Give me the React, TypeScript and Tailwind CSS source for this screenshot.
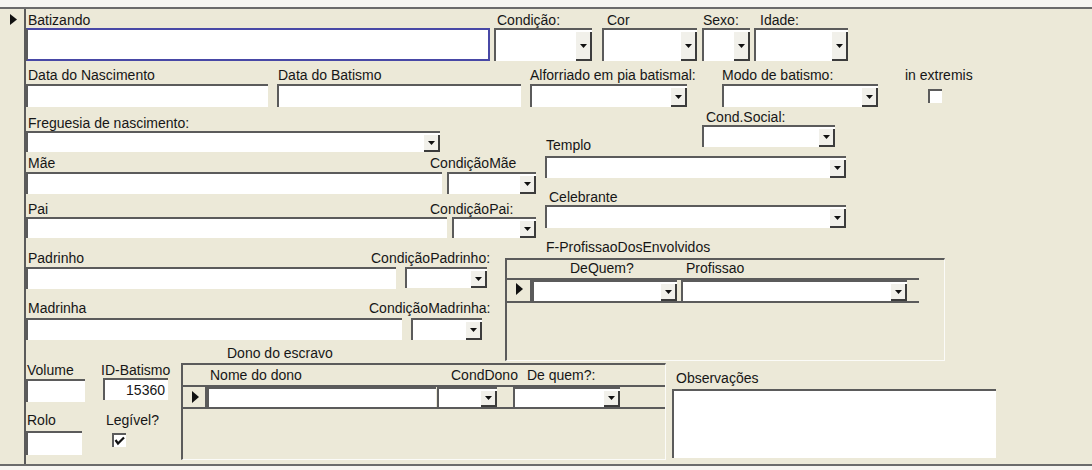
import type { ReactNode } from 'react';

// sunken control edge used by every text box / combo
const EDGE = 'border-t-2 border-l-2 border-[#5b5b5b]';

function Label({ children, className = '' }: { children: ReactNode; className?: string }) {
  return <div className={`h-[16px] leading-[16px] whitespace-nowrap ${className}`}>{children}</div>;
}

function TextBox({ className = '', children }: { className?: string; children?: ReactNode }) {
  return <div className={`bg-white ${EDGE} ${className}`}>{children}</div>;
}

function DropArrow() {
  return (
    <svg width="7" height="4" viewBox="0 0 7 4">
      <path d="M0 0h7L3.5 4z" fill="#111" />
    </svg>
  );
}

function Combo({ className = '' }: { className?: string }) {
  return (
    <div className={`flex bg-white ${EDGE} ${className}`}>
      <div className="flex-1" />
      <div className="w-[16px] mt-[2px] flex items-center justify-center bg-[#f1f0ea] border-r-2 border-b-2 border-[#3c3c3c]">
        <DropArrow />
      </div>
    </div>
  );
}

function CheckBox({ checked = false, className = '' }: { checked?: boolean; className?: string }) {
  return (
    <div className={`w-[14px] h-[14px] bg-white ${EDGE} ${className}`}>
      {checked && (
        <svg width="12" height="12" viewBox="0 0 12 12" className="block">
          <path d="M1.5 5l2.5 3.5L10 2.5" fill="none" stroke="#111" strokeWidth="2.2" />
        </svg>
      )}
    </div>
  );
}

function RowArrow() {
  return (
    <svg width="7" height="12" viewBox="0 0 7 12" className="block">
      <path d="M0 0L7 6L0 12z" fill="#111" />
    </svg>
  );
}

// subform frame: dark top/left, light bottom/right
const FRAME =
  'border-t-2 border-l-2 border-r border-b border-t-[#5b5b5b] border-l-[#5b5b5b] border-r-[#fbfbf8] border-b-[#fbfbf8]';

export default function App() {
  return (
    <div className="w-[1092px] h-[470px] bg-[#ECE9D8] text-[14px] text-[#161616] overflow-hidden font-['Liberation_Sans',Arial,sans-serif]">
      <div className="h-[7px] bg-[#f6f5f1]" />
      <div className="flex h-[459px] border-y-2 border-[#6b6b6b]">
        {/* record selector */}
        <div className="w-[26px] shrink-0 border-r-2 border-[#5b5b5b] pt-[5px] pl-[10px]">
          <svg width="7" height="11" viewBox="0 0 7 11" className="block">
            <path d="M0 0L7 5.5L0 11z" fill="#111" />
          </svg>
        </div>

        <div className="flex-1 flex flex-col">
          {/* Batizando / Condição / Cor / Sexo / Idade */}
          <div className="flex pt-[3px] h-[52px] shrink-0">
            <div className="flex flex-col w-[464px]">
              <Label className="pl-[2px]">Batizando</Label>
              <div className="h-[33px] bg-white border-2 border-[#4848a6] border-l-[#5b5b5b]" />
            </div>
            <div className="flex flex-col ml-[4px] w-[98px]">
              <Label className="pl-[3px]">Condição:</Label>
              <Combo className="h-[33px]" />
            </div>
            <div className="flex flex-col ml-[10px] w-[95px]">
              <Label className="pl-[5px]">Cor</Label>
              <Combo className="h-[33px]" />
            </div>
            <div className="flex flex-col ml-[5px] w-[48px]">
              <Label className="pl-[1px]">Sexo:</Label>
              <Combo className="h-[33px]" />
            </div>
            <div className="flex flex-col ml-[4px] w-[94px]">
              <Label className="pl-[6px]">Idade:</Label>
              <Combo className="h-[33px]" />
            </div>
          </div>

          {/* datas, alforria, modo */}
          <div className="flex pt-[6px] h-[46px] shrink-0">
            <div className="flex flex-col w-[242px]">
              <Label className="pl-[2px]">Data do Nascimento</Label>
              <TextBox className="mt-[1px] h-[23px]" />
            </div>
            <div className="flex flex-col ml-[9px] w-[244px]">
              <Label className="pl-[1px]">Data do Batismo</Label>
              <TextBox className="mt-[1px] h-[23px]" />
            </div>
            <div className="flex flex-col ml-[9px] w-[157px]">
              <Label>Alforriado em pia batismal:</Label>
              <Combo className="mt-[1px] h-[23px]" />
            </div>
            <div className="flex flex-col ml-[35px] w-[156px]">
              <Label>Modo de batismo:</Label>
              <Combo className="mt-[1px] h-[23px]" />
            </div>
            <div className="flex flex-col ml-[27px]">
              <Label>in extremis</Label>
              <CheckBox className="ml-[23px] mt-[6px]" />
            </div>
          </div>

          {/* freguesia, pais / templo, celebrante */}
          <div className="flex h-[131px] shrink-0">
            <div className="flex flex-col w-[510px]">
              <Label className="mt-[8px] pl-[2px]">Freguesia de nascimento:</Label>
              <Combo className="w-[414px] h-[21px]" />

              <div className="flex mt-[3px]">
                <div className="flex flex-col w-[416px]">
                  <Label className="pl-[2px]">Mãe</Label>
                  <TextBox className="mt-[1px] h-[22px]" />
                </div>
                <div className="flex flex-col ml-[5px] w-[89px]">
                  <Label className="ml-[-17px]">CondiçãoMãe</Label>
                  <Combo className="mt-[1px] h-[22px]" />
                </div>
              </div>

              <div className="flex mt-[7px]">
                <div className="flex flex-col w-[421px]">
                  <Label className="pl-[2px]">Pai</Label>
                  <TextBox className="h-[21px]" />
                </div>
                <div className="flex flex-col ml-[5px] w-[84px]">
                  <Label className="ml-[-22px]">CondiçãoPai:</Label>
                  <Combo className="h-[21px]" />
                </div>
              </div>
            </div>

            <div className="flex flex-col ml-[9px] w-[301px]">
              <div className="flex items-end pt-[2px]">
                <div className="w-[157px] mb-[-6px]">
                  <Label className="pl-[1px]">Templo</Label>
                </div>
                <div className="flex flex-col w-[133px]">
                  <Label className="pl-[4px]">Cond.Social:</Label>
                  <Combo className="h-[22px]" />
                </div>
              </div>
              <Combo className="mt-[9px] h-[22px]" />
              <Label className="mt-[11px] pl-[4px]">Celebrante</Label>
              <Combo className="h-[23px]" />
            </div>
          </div>

          {/* padrinhos / profissões */}
          <div className="flex h-[123px] shrink-0">
            <div className="flex flex-col w-[479px]">
              <div className="flex mt-[12px]">
                <div className="flex flex-col w-[370px]">
                  <Label className="pl-[2px]">Padrinho</Label>
                  <TextBox className="mt-[1px] h-[22px]" />
                </div>
                <div className="flex flex-col ml-[9px] w-[82px]">
                  <Label className="ml-[-34px]">CondiçãoPadrinho:</Label>
                  <Combo className="mt-[1px] h-[21px]" />
                </div>
              </div>

              <div className="flex mt-[11px]">
                <div className="flex flex-col w-[376px]">
                  <Label className="pl-[2px]">Madrinha</Label>
                  <TextBox className="mt-[2px] h-[22px]" />
                </div>
                <div className="flex flex-col ml-[9px] w-[71px]">
                  <Label className="ml-[-42px]">CondiçãoMadrinha:</Label>
                  <Combo className="mt-[2px] h-[22px]" />
                </div>
              </div>

              <Label className="ml-[201px] mt-[5px]">Dono do escravo</Label>
            </div>

            <div className="flex flex-col">
              <Label className="pl-[41px] mt-[1px]">F-ProfissaoDosEnvolvidos</Label>
              <div className={`mt-[3px] w-[440px] h-[103px] ${FRAME}`}>
                <div className="flex w-[412px] h-[20px] border-b-2 border-[#5b5b5b]">
                  <div className="w-[25px]" />
                  <div className="w-[149px] pl-[38px]">
                    <Label>DeQuem?</Label>
                  </div>
                  <Label className="pl-[5px]">Profissao</Label>
                </div>
                <div className="flex w-[412px] h-[23px] border-b-2 border-[#5b5b5b]">
                  <div className="w-[25px] border-r-2 border-[#5b5b5b] pl-[9px] pt-[3px]">
                    <RowArrow />
                  </div>
                  <Combo className="w-[145px] h-[21px]" />
                  <Combo className="ml-[4px] w-[226px] h-[21px]" />
                </div>
              </div>
            </div>
          </div>

          {/* volume, rolo, dono, observações */}
          <div className="flex h-[103px] shrink-0">
            <div className="flex flex-col w-[59px]">
              <Label className="mt-[1px] pl-[1px]">Volume</Label>
              <TextBox className="mt-[1px] h-[23px]" />
              <Label className="mt-[10px] pl-[1px]">Rolo</Label>
              <TextBox className="mt-[3px] h-[24px] w-[56px]" />
            </div>

            <div className="flex flex-col ml-[16px] w-[80px]">
              <Label className="mt-[1px]">ID-Batismo</Label>
              <TextBox className="ml-[2px] w-[65px] h-[22px] text-right pr-[3px] leading-[16px] pt-[2px]">
                15360
              </TextBox>
              <Label className="ml-[5px] mt-[12px]">Legível?</Label>
              <CheckBox checked className="ml-[11px] mt-[5px]" />
            </div>

            <div className={`mt-[2px] w-[485px] h-[97px] ${FRAME}`}>
              <div className="flex h-[22px] border-b-2 border-[#5b5b5b] pt-[2px]">
                <div className="w-[25px]" />
                <div className="w-[243px] pl-[2px]">
                  <Label>Nome do dono</Label>
                </div>
                <Label>CondDono</Label>
                <Label className="ml-[9px]">De quem?:</Label>
              </div>
              <div className="flex h-[22px] border-b-2 border-[#5b5b5b]">
                <div className="w-[24px] border-r-2 border-[#5b5b5b] pl-[9px] pt-[4px]">
                  <RowArrow />
                </div>
                <TextBox className="w-[229px] h-[20px]" />
                <Combo className="ml-[1px] w-[60px] h-[20px]" />
                <Combo className="ml-[16px] w-[107px] h-[20px]" />
              </div>
            </div>

            <div className="flex flex-col ml-[6px]">
              <Label className="mt-[9px] pl-[4px]">Observações</Label>
              <TextBox className="mt-[3px] w-[324px] h-[69px]" />
            </div>
          </div>
        </div>
      </div>
      <div className="h-[4px] bg-[#f6f5f1]" />
    </div>
  );
}
